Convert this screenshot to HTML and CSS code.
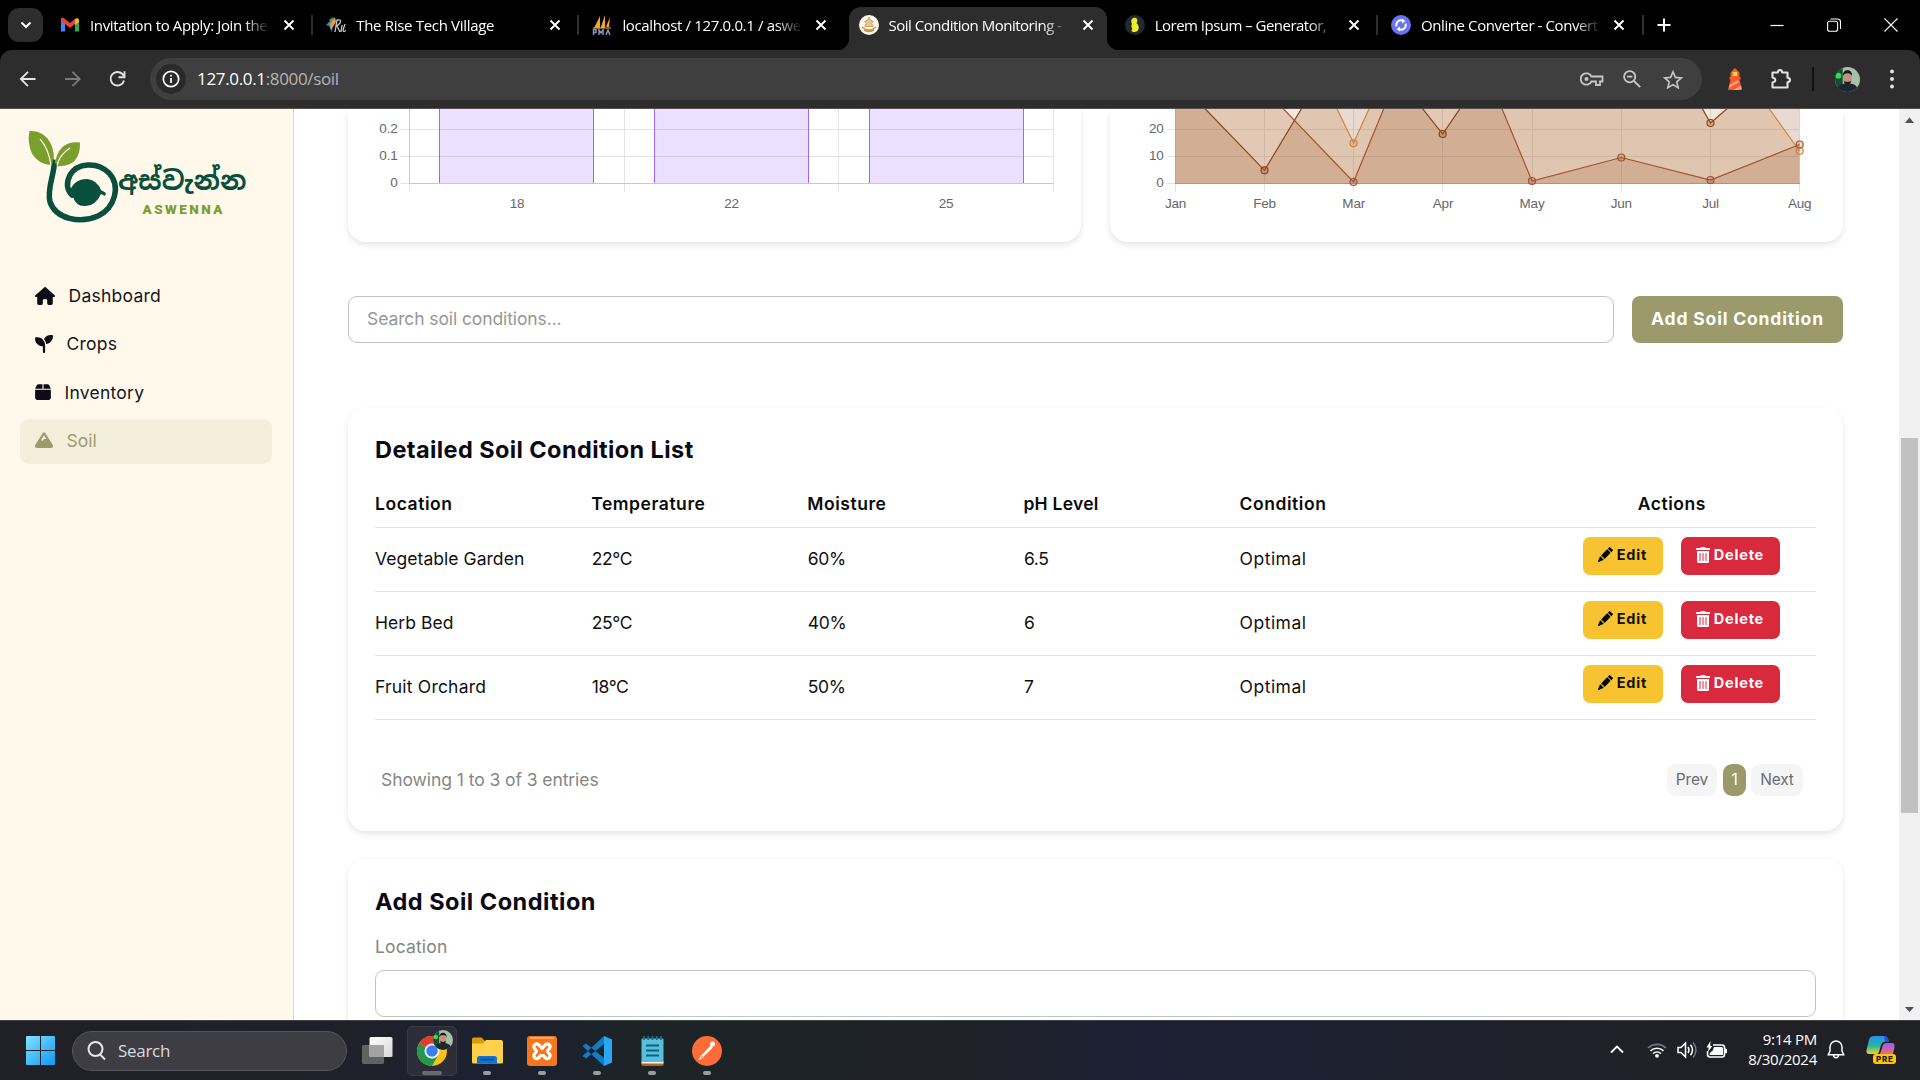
FILE: index.html
```html
<!DOCTYPE html>
<html lang="en">
<head>
<meta charset="utf-8">
<title>Soil Condition Monitoring</title>
<link rel="stylesheet" href="styles.css">
</head>
<body>
<svg class="defs" width="0" height="0">
  <symbol id="i-x" viewBox="0 0 12 12"><path d="M1.5 1.5l9 9M10.5 1.5l-9 9" stroke="#fff" stroke-width="1.9" fill="none"/></symbol>
  <symbol id="i-pencil" viewBox="0 0 16 16"><path d="M12.854.146a.5.5 0 0 0-.707 0L10.5 1.793 14.207 5.5l1.647-1.646a.5.5 0 0 0 0-.708zm.646 6.061L9.793 2.5 3.293 9H3.5a.5.5 0 0 1 .5.5v.5h.5a.5.5 0 0 1 .5.5v.5h.5a.5.5 0 0 1 .5.5v.5h.5a.5.5 0 0 1 .5.5v.207zm-7.468 7.468A.5.5 0 0 1 6 13.5V13h-.5a.5.5 0 0 1-.5-.5V12h-.5a.5.5 0 0 1-.5-.5V11h-.5a.5.5 0 0 1-.5-.5V10h-.5a.5.5 0 0 1-.175-.032l-.179.178a.5.5 0 0 0-.11.168l-2 5a.5.5 0 0 0 .65.65l5-2a.5.5 0 0 0 .168-.11z"/></symbol>
  <symbol id="i-trash" viewBox="0 0 448 512"><path d="M32 464a48 48 0 0 0 48 48h288a48 48 0 0 0 48-48V128H32zm272-256a16 16 0 0 1 32 0v224a16 16 0 0 1-32 0zm-96 0a16 16 0 0 1 32 0v224a16 16 0 0 1-32 0zm-96 0a16 16 0 0 1 32 0v224a16 16 0 0 1-32 0zM432 32H312l-9.4-18.7A24 24 0 0 0 281.1 0H166.8a23.72 23.72 0 0 0-21.4 13.3L136 32H16A16 16 0 0 0 0 48v32a16 16 0 0 0 16 16h416a16 16 0 0 0 16-16V48a16 16 0 0 0-16-16z"/></symbol>
  <symbol id="i-face" viewBox="0 0 26 26">
    <clipPath id="fc"><circle cx="13" cy="13" r="13"/></clipPath>
    <g clip-path="url(#fc)"><rect width="26" height="26" fill="#a9bfae"/><path d="M0 0h8v26H0z" fill="#1d4a35"/><circle cx="3.500" cy="9" r="3" fill="#2be04e"/><path d="M2 26c0-7 5-9 11-9s11 2 11 9z" fill="#1d2730"/><ellipse cx="13" cy="11.500" rx="4.400" ry="6" fill="#c1917a"/><path d="M8.300 9.500c-1-8 10.400-8 9.400 0-1-2-2-3-4.700-3s-3.700 1-4.700 3zM9 14c1 2 7 2 8 0 0 5-8 5-8 0z" fill="#1c1816"/></g>
  </symbol>
</svg>

<header class="tabstrip">
  <div class="tab-search"><svg width="12" height="8" viewBox="0 0 12 8"><path d="M1.500 1.500L6 6l4.500-4.500" fill="none" stroke="#fff" stroke-width="2"/></svg></div>
  <div class="tab sep">
    <svg class="fav" viewBox="0 0 20 20"><path d="M1 5v11.500h4V8z" fill="#4285f4"/><path d="M15 8v8.500h4V5z" fill="#34a853"/><path d="M1 3.500c1-1.500 2.500-1 4 .500l5 4 5-4v5l-5 4-5-4-4-3z" fill="#ea4335"/><path d="M15 4c1.500-1.500 4-1 4 1v2l-4 3z" fill="#fbbc04"/></svg>
    <span class="title t0">Invitation to Apply: Join the</span><svg class="x"><use href="#i-x"/></svg>
  </div>
  <div class="tab sep">
    <svg class="fav" viewBox="0 0 20 20"><path d="M0 10l8-8-2 15-3-6z" fill="#2f8fc4"/><path d="M4 9l5-7 1 5-5 8z" fill="#e79b3a"/><path d="M3 5l4-3-2 5z" fill="#4ca65a"/><path d="M9 17l2-12q5-1 3 3l-3 3 3 6M15 17l1-7M19 9l-2 6q1 3 3 0" fill="none" stroke="#c8c8c8" stroke-width="1.300"/></svg>
    <span class="title t1">The Rise Tech Village</span><svg class="x"><use href="#i-x"/></svg>
  </div>
  <div class="tab">
    <svg class="fav" viewBox="0 0 20 20"><path d="M2 13L8 1v12zM8.500 13L13 0v13zM14 12l4-10-1 10z" fill="#f6a32b"/><path d="M1 13h18" stroke="#f6a32b"/><path d="M1.500 20v-5.500h2.500v3h-2M7 20v-5l2 3 2-3v5M14 20l2-5 2 5" fill="none" stroke="#8b93bd" stroke-width="1.500"/></svg>
    <span class="title t2">localhost / 127.0.0.1 / aswe</span><svg class="x"><use href="#i-x"/></svg>
  </div>
  <div class="tab active">
    <svg class="fav" viewBox="0 0 20 20"><circle cx="10" cy="10" r="10" fill="#fbf8f2"/><path d="M3 12q7 6 14 0M5 15q5 3 10 0" fill="none" stroke="#c79b4a" stroke-width="1.600"/><path d="M10 2l1.300 3 3 1.500-1.500 2 1.500 3H5.700l1.500-3-1.500-2 3-1.500z" fill="#e3c691" stroke="#c79b4a" stroke-width=".8"/></svg>
    <span class="title t3">Soil Condition Monitoring -</span><svg class="x"><use href="#i-x"/></svg>
  </div>
  <div class="tab sep">
    <svg class="fav" viewBox="0 0 20 20"><circle cx="10" cy="10" r="10" fill="#1f2b2e"/><path d="M8 3q3-1 4 1 1 2-.500 4 3 3 2 6-1 3-4 3-3 0-3-2l1-1q-2-3-.500-5-2-4 1-6z" fill="#f1ee2e"/></svg>
    <span class="title t4">Lorem Ipsum – Generator,</span><svg class="x"><use href="#i-x"/></svg>
  </div>
  <div class="tab sep">
    <svg class="fav" viewBox="0 0 20 20"><circle cx="10" cy="10" r="10" fill="#6a74f0"/><path d="M5.500 11.500a4.700 4.700 0 0 1 6.500-5.700M14.500 8.500a4.700 4.700 0 0 1-6.500 5.700" fill="none" stroke="#fff" stroke-width="1.900"/><path d="M11 3.500l3.500 2.500-3.500 2.500zM9 16.500L5.500 14 9 11.500z" fill="#fff"/></svg>
    <span class="title t5">Online Converter - Convert</span><svg class="x last"><use href="#i-x"/></svg>
  </div>
  <svg class="plus" width="14" height="14" viewBox="0 0 14 14"><path d="M7 .5v13M.5 7h13" stroke="#fff" stroke-width="2"/></svg>
  <div class="winctl">
    <svg width="14" height="14" viewBox="0 0 14 14"><path d="M.5 7.500h13" stroke="#fff" stroke-width="1.200"/></svg>
    <svg width="14" height="14" viewBox="0 0 14 14" fill="none" stroke="#fff" stroke-width="1.100"><rect x=".6" y="3.200" width="10" height="10" rx="2"/><path d="M3.500 1h7a3 3 0 0 1 3 3v7"/></svg>
    <svg width="14" height="14" viewBox="0 0 14 14"><path d="M.5.5l13 13M13.500.5l-13 13" stroke="#fff" stroke-width="1.100"/></svg>
  </div>
</header>

<nav class="toolbar">
  <svg class="ic" viewBox="0 0 20 20"><path d="M17.500 10H3M10 2.800L2.800 10l7.200 7.200" fill="none" stroke="#e3e3e3" stroke-width="1.800"/></svg>
  <svg class="ic" viewBox="0 0 20 20"><path d="M2 10h14.500M9.500 2.800L16.700 10l-7.200 7.200" fill="none" stroke="#7b7b7b" stroke-width="1.800"/></svg>
  <svg class="ic" viewBox="0 0 20 20"><path d="M16 11.500A6.800 6.800 0 1 1 14.300 5l2 2" fill="none" stroke="#e3e3e3" stroke-width="1.900"/><path d="M16.500 2.200v6h-6" fill="none" stroke="#e3e3e3" stroke-width="1.900"/></svg>
  <div class="omnibox">
    <span class="info"><svg width="18" height="18" viewBox="0 0 18 18"><circle cx="9" cy="9" r="7.700" fill="none" stroke="#fff" stroke-width="1.700"/><path d="M9 8v5M9 4.800v1.700" stroke="#fff" stroke-width="1.700"/></svg></span>
    <span class="url">127.0.0.1<em>:8000/soil</em></span>
    <svg class="key" width="24" height="16" viewBox="0 0 24 16" fill="none" stroke="#c7c7c7" stroke-width="1.800"><path d="M11.500 5.500h11v5h-2.500v3.500h-4v-3.500h-4.500A5.700 5.700 0 1 1 11.500 5.500z"/><circle cx="6.500" cy="8" r="2" fill="#c7c7c7" stroke="none"/></svg>
    <svg class="mag" width="18" height="18" viewBox="0 0 18 18" fill="none" stroke="#c7c7c7" stroke-width="1.800"><circle cx="6.700" cy="6.700" r="5.600"/><path d="M11 11l6.200 6.200M4 6.700h5.400"/></svg>
    <svg class="star" width="20" height="19" viewBox="0 0 20 19"><path d="M10 1.800l2.400 5.600 6 .5-4.600 4 1.400 5.900L10 14.600l-5.200 3.200 1.400-5.900-4.600-4 6-.5z" fill="none" stroke="#c7c7c7" stroke-width="1.600"/></svg>
  </div>
  <svg class="light" width="16" height="22" viewBox="0 0 16 22"><path d="M3.500 4.500L8 0l4.500 4.500V9h1v2.500h-1L15 22H1L3.500 11.500h-1V9h1z" fill="#ff5a2b"/><path d="M5.800 4h4.400v4H5.800z" fill="#ffe23d"/><path d="M2.500 17l8.500-5 1.200 2-10.200 6zM6 22l8-4.500.7 3L12 22z" fill="#ff9f86"/></svg>
  <svg class="puz" width="22" height="22" viewBox="0 0 22 22"><path d="M2.500 4.500h5.300q.2-2.500 2.200-2.500t2.200 2.500h5.300v5.300q2.500.2 2.500 2.200t-2.500 2.200v5.300h-15v-5q2.700-.6 2.700-2.500t-2.700-2.500z" fill="none" stroke="#e3e3e3" stroke-width="2.100" stroke-linejoin="round"/></svg>
  <i class="vsep"></i>
  <svg class="face" width="25" height="25"><use href="#i-face"/></svg>
  <svg class="dots" width="6" height="20" viewBox="0 0 6 20" fill="#e3e3e3"><circle cx="3" cy="2.500" r="2"/><circle cx="3" cy="10" r="2"/><circle cx="3" cy="17.500" r="2"/></svg>
</nav>

<div class="viewport">
  <aside class="sidebar">
    <svg class="logo" width="252" height="124" viewBox="20 109 252 124">
      <path d="M29.500 131q14-1 21 12 5 10 2.500 22.500-15-1-21-12-5-11-2.500-22.500z" fill="#7a9f2c"/>
      <path d="M80 142.500q-12-1-18 5-7 7-6.500 18.500 13 1 19-5 6-7 5.500-18.500z" fill="#7a9f2c"/>
      <path d="M40 139q9 10 11 27M70 148q-11 7-13 18" fill="none" stroke="#fff8eb" stroke-width="1.200"/>
      <path d="M53 159.500l2.500 0 0 10-4 0z" fill="#08503c"/>
      <path d="M54 166C53 178 47 189 50 202c6 17 30 22 48 14 17-8 23-30 11-43-12-12-32-10-39 2-4 8-3 15 2 20" fill="none" stroke="#08503c" stroke-width="5.500" stroke-linecap="round"/>
      <path d="M70 191q4-12 17-12 10 1 14 11l5 3-1 3-4-2q-6 13-17 12-8 0-11-9z" fill="#08503c"/>
      <text x="118" y="190" class="sinhala" textLength="128.500" lengthAdjust="spacingAndGlyphs">අස්වැන්න</text>
      <text x="142.500" y="213.500" class="aswenna" textLength="80">ASWENNA</text>
    </svg>
    <a class="nav"><svg width="20" height="18" viewBox="0 0 576 512"><path d="M575.8 255.5c0 18-15 32.1-32 32.1h-32l.7 160.2c0 2.700-.2 5.400-.5 8.100V472c0 22.100-17.900 40-40 40H392c-22.100 0-40-17.900-40-40V384c0-17.700-14.300-32-32-32H256c-17.700 0-32 14.300-32 32v88c0 22.100-17.900 40-40 40H104c-22.100 0-40-17.900-40-40V287.600H32c-18 0-32-14-32-32.100c0-9 3-17 10-24L266.400 8c7-7 15-8 22-8s15 2 21 7L564.800 231.500c8 7 12 15 11 24z"/></svg><span>Dashboard</span></a>
    <a class="nav"><svg width="18" height="18" viewBox="0 0 512 512"><path d="M512 32c0 113.600-84.600 207.500-194.200 222c-7.100-53.400-30.600-101.600-65.300-139.300C290.800 46.300 364 0 448 0h32c17.700 0 32 14.300 32 32zM0 96C0 78.300 14.300 64 32 64H64c123.700 0 224 100.300 224 224v192c0 17.700-14.300 32-32 32s-32-14.300-32-32V320C100.300 320 0 219.700 0 96z"/></svg><span>Crops</span></a>
    <a class="nav"><svg width="16" height="18" viewBox="0 0 448 512"><path d="M50.700 58.500L0 160H208V32H93.700C75.500 32 58.900 42.300 50.700 58.500zM240 160H448L397.300 58.500C389.100 42.300 372.500 32 354.300 32H240V160zm208 32H0V416c0 35.300 28.700 64 64 64H384c35.300 0 64-28.700 64-64V192z"/></svg><span>Inventory</span></a>
    <a class="nav on"><svg width="18" height="18" viewBox="0 0 512 512"><path d="M256 32c12.500 0 24.100 6.400 30.700 17L503.400 394.400c5.600 8.900 8.600 19.200 8.600 29.700c0 30.900-25 55.900-55.900 55.900H55.900C25 480 0 455 0 424.100c0-10.500 3-20.800 8.600-29.700L225.200 49c6.600-10.600 18.300-17 30.800-17zm65 192L256 120.400 176.900 246.500 208 288l48-64h65z"/></svg><span>Soil</span></a>
  </aside>

  <main class="content">
    <section class="charts">
      <svg class="chart" width="733" height="133" viewBox="348 109 733 133">
        <g stroke="#e4e4e4"><path d="M401 129.500h652M401 156.500h652M401 183.500h8M409.500 184v8M624.500 109v83M838.500 109v83M1053.500 109v83"/></g>
        <g fill="#9966ff" fill-opacity=".2"><path d="M439.500 109h154v74.500h-154zM654.500 109h154v74.500h-154zM869.500 109h154v74.500h-154z"/></g>
        <path d="M439.500 109v75M593.500 109v75M654.500 109v75M808.500 109v75M869.500 109v75M1023.500 109v75" stroke="#9966ff"/>
        <path d="M409.500 109v75M409 183.500h644.500" stroke="#c9c9cd"/>
        <g text-anchor="end"><text x="397.500" y="133">0.2</text><text x="397.500" y="160">0.1</text><text x="397.500" y="187">0</text></g>
        <g text-anchor="middle"><text x="517" y="208">18</text><text x="731.500" y="208">22</text><text x="946" y="208">25</text></g>
      </svg>
      <svg class="chart" width="733" height="133" viewBox="1110 109 733 133">
        <path d="M1167 129.500h633M1167 156.500h633M1167 183.500h633M1175.500 109v83M1264.500 109v83M1353.500 109v83M1442.500 109v83M1532.500 109v83M1621.500 109v83M1710.500 109v83M1799.500 109v83" stroke="#e4e4e4" fill="none"/>
        <path d="M1175 183.500V40L1264.300-42 1353.500 143 1442.700-53 1710.500 27 1799.500 151v32.500z" fill="#cd853f" fill-opacity=".2"/>
        <path d="M1175 183.500V40L1264.300 89 1353.500 182 1442.700-34 1532 181l89.300-23.500 89.200 22.500 89-35.500v39z" fill="#a0522d" fill-opacity=".2"/>
        <path d="M1175 183.500V77.600L1264.500 170.300 1353.500 22 1442.700 134 1532 3 1621.300-33 1710.500 123 1799.500 46v137.500z" fill="#8b4513" fill-opacity=".2"/>
        <path d="M1175 183.500h625" stroke="#b4937d"/>
        <g fill="none" stroke-width="1.200">
          <path d="M1264.300-42L1353.500 143 1442.700-53 1710.500 27 1799.500 151" stroke="#cd853f"/>
          <path d="M1264.300 89L1353.500 182 1442.700-34 1532 181l89.300-23.500 89.200 22.500 89-35.500" stroke="#a0522d"/>
          <path d="M1175 77.600L1264.500 170.300 1353.500 22 1442.700 134 1532 3 1621.300-33 1710.500 123 1799.500 46" stroke="#8b4513"/>
        </g>
        <g fill="#cd853f" fill-opacity=".2" stroke="#cd853f" stroke-width="1.200"><circle cx="1353.500" cy="143.300" r="3.500"/><circle cx="1799.700" cy="151" r="3.500"/></g>
        <g fill="#a0522d" fill-opacity=".2" stroke="#a0522d" stroke-width="1.200"><circle cx="1353.500" cy="182" r="3.500"/><circle cx="1532" cy="181" r="3.500"/><circle cx="1621.300" cy="157.500" r="3.500"/><circle cx="1710.500" cy="180" r="3.500"/><circle cx="1799.700" cy="144.500" r="3.500"/></g>
        <g fill="#8b4513" fill-opacity=".2" stroke="#8b4513" stroke-width="1.200"><circle cx="1264.500" cy="170.300" r="3.500"/><circle cx="1442.700" cy="134" r="3.500"/><circle cx="1710.500" cy="123" r="3.500"/></g>
        <g text-anchor="end"><text x="1163.500" y="133">20</text><text x="1163.500" y="160">10</text><text x="1163.500" y="187">0</text></g>
        <g text-anchor="middle"><text x="1175.500" y="208">Jan</text><text x="1264.500" y="208">Feb</text><text x="1353.700" y="208">Mar</text><text x="1443" y="208">Apr</text><text x="1532" y="208">May</text><text x="1621.300" y="208">Jun</text><text x="1710.500" y="208">Jul</text><text x="1799.700" y="208">Aug</text></g>
      </svg>
    </section>

    <section class="searchrow">
      <div class="field">Search soil conditions...</div>
      <div class="addbtn">Add Soil Condition</div>
    </section>

    <section class="card list">
      <h2>Detailed Soil Condition List</h2>
      <div class="row head"><span>Location</span><span>Temperature</span><span>Moisture</span><span class="ph">pH Level</span><span>Condition</span><span class="act-h">Actions</span></div>
      <div class="row"><span>Vegetable Garden</span><span class="num">22°C</span><span class="num">60%</span><span class="num">6.5</span><span class="cond">Optimal</span><span class="act"><a class="edit"><svg width="15" height="15"><use href="#i-pencil"/></svg>Edit</a><a class="del"><svg width="14" height="16"><use href="#i-trash"/></svg>Delete</a></span></div>
      <div class="row"><span>Herb Bed</span><span class="num">25°C</span><span class="num">40%</span><span class="num">6</span><span class="cond">Optimal</span><span class="act"><a class="edit"><svg width="15" height="15"><use href="#i-pencil"/></svg>Edit</a><a class="del"><svg width="14" height="16"><use href="#i-trash"/></svg>Delete</a></span></div>
      <div class="row"><span class="fruit">Fruit Orchard</span><span class="num">18°C</span><span class="num">50%</span><span class="num">7</span><span class="cond">Optimal</span><span class="act"><a class="edit"><svg width="15" height="15"><use href="#i-pencil"/></svg>Edit</a><a class="del"><svg width="14" height="16"><use href="#i-trash"/></svg>Delete</a></span></div>
      <div class="foot"><span class="showing">Showing 1 to 3 of 3 entries</span><div class="pages"><a class="prev">Prev</a><a class="cur">1</a><a class="next">Next</a></div></div>
    </section>

    <section class="card add">
      <h2>Add Soil Condition</h2>
      <label>Location</label>
      <div class="field"></div>
    </section>
  </main>

  <div class="scroll">
    <svg width="21" height="21" viewBox="0 0 21 21"><path d="M6 14l4.500-5.500L15 14z" fill="#505050"/></svg>
    <i class="thumb"></i>
    <svg width="21" height="21" viewBox="0 0 21 21"><path d="M6 8l4.500 5L15 8z" fill="#505050"/></svg>
  </div>
</div>

<footer class="taskbar">
  <svg class="win" width="29" height="29" viewBox="0 0 29 29"><defs><linearGradient id="wg" x1="0" y1="0" x2="1" y2="1"><stop offset="0" stop-color="#7fe3ff"/><stop offset="1" stop-color="#1296f5"/></linearGradient></defs><path d="M1 0h13v14H0V1q0-1 1-1zM15 0h13q1 0 1 1v13H15zM0 15h14v14H1q-1 0-1-1zM15 15h14v13q0 1-1 1H15z" fill="url(#wg)"/></svg>
  <div class="tsearch"><svg width="20" height="20" viewBox="0 0 20 20" fill="none" stroke="#e6e6ea" stroke-width="2"><circle cx="8.500" cy="8" r="7"/><path d="M13 13.500l5 5"/></svg><span>Search</span></div>
  <svg class="tview" width="31" height="28" viewBox="0 0 31 28"><defs><linearGradient id="tg" x1="0" y1="0" x2="1" y2="1"><stop offset="0" stop-color="#fff"/><stop offset="1" stop-color="#d8d8d8"/></linearGradient></defs><rect y="8" width="22" height="19" rx="1.500" fill="#626262"/><rect x="7.500" y="0" width="23" height="20" rx="1.500" fill="url(#tg)"/><path d="M7.500 8H22v12H7.500z" fill="#a3a3a3"/></svg>
  <div class="app chrome">
    <svg width="50" height="50" viewBox="407 1025 50 50"><circle cx="432" cy="1050" r="15" fill="#fbc116"/><path d="M432 1050L419 1042.500A15 15 0 0 1 445 1042.500z" fill="#e33b2e"/><path d="M419 1042.500A15 15 0 0 0 432 1065l6.500-11.300-6.500-3.700z" fill="#229a4c"/><circle cx="432" cy="1050" r="7.500" fill="#fff"/><circle cx="432" cy="1050" r="5.800" fill="#3b7ded"/><use href="#i-face" x="433" y="1029" width="20" height="20"/></svg>
  </div>
  <div class="app"><svg width="31" height="27" viewBox="0 0 31 27"><path d="M0 2q0-1.500 1.500-1.500h8L13 4v4H0z" fill="#dc9a05"/><path d="M0 6.500h11L14 3h15q2 0 2 2v20q0 1.500-1.500 1.500h-28Q0 26.500 0 25z" fill="#ffd04a"/><path d="M5 26.500v-5q0-2.500 2.500-2.500h15q2.500 0 2.500 2.500v5z" fill="#1173cc"/><path d="M9 22.500h12" stroke="#0b4b94" stroke-width="1.500" stroke-linecap="round"/></svg></div>
  <div class="app"><svg width="30" height="30" viewBox="0 0 30 30"><rect width="30" height="30" rx="3" fill="#f6761d"/><path d="M3 1h24v2H3z" fill="#fba76a"/><path d="M8 8.500q2-1.500 4 .5l3 3.500 3-3.500q2-2 4-.5 2 2 .5 4l-2 2.500 2 3q1.500 2-.5 4-2 1.500-4-.5l-1.500-2h-3L12 21.500q-2 2-4 .5-2-2-.5-4l2-3-2-2.500q-1.500-2 .5-4z" fill="#f6761d" stroke="#fff" stroke-width="3.200" stroke-linejoin="round"/></svg></div>
  <div class="app"><svg width="30" height="30" viewBox="0 0 30 30"><path d="M22 0l8 3.500v23L22 30z" fill="#2aa7f2"/><path d="M22 0v8L4 22.500 0.500 20zM22 30v-8L4 7.500.5 10z" fill="#0f7dc8"/></svg></div>
  <div class="app"><svg width="23" height="30" viewBox="0 0 23 30"><rect x=".5" y="24" width="22" height="6" rx="1.500" fill="#b8621b"/><path d="M.5 25.500h22v2H.5z" fill="#f4f4f4"/><rect x=".5" y="2.500" width="22" height="23.500" rx="1" fill="#55bfdc"/><path d="M3 0v4M7.200 0v4M11.500 0v4M15.800 0v4M20 0v4" stroke="#1d6c8e" stroke-width="1.800"/><path d="M5 9.500h13M5 14.500h13M5 19.500h13" stroke="#135e7e" stroke-width="1.800"/></svg></div>
  <div class="app"><svg width="30" height="30" viewBox="0 0 30 30"><circle cx="15" cy="15" r="15" fill="#ff6c37"/><circle cx="20.500" cy="8" r="2.500" fill="#fff"/><path d="M18.500 10l2 1.500-8.500 8-2.500.5z" fill="#fff" stroke="#fff"/><path d="M9.500 19l-2.500 5 5-3.500" fill="none" stroke="#fff"/></svg></div>
  <div class="tray">
    <svg width="14" height="9" viewBox="0 0 14 9"><path d="M1 7.500l6-6 6 6" fill="none" stroke="#fff" stroke-width="1.900"/></svg>
    <svg class="wifi" width="20" height="16" viewBox="0 0 20 16" fill="none" stroke-width="1.600"><path d="M1 6a13 13 0 0 1 18 0" stroke="#77777f"/><path d="M3.500 8.800a9.500 9.500 0 0 1 13 0M6 11.500a6 6 0 0 1 8 0" stroke="#fff"/><circle cx="10" cy="13.800" r="1.900" fill="#fff"/></svg>
    <svg class="spk" width="20" height="18" viewBox="0 0 20 18" fill="none" stroke="#fff" stroke-width="1.500"><path d="M1 6.500h3L8.500 2v14L4 11.500H1z"/><path d="M11 6q2 3 0 6M13.500 3.800q4 5.200 0 10.400"/><path d="M16.200 1.500q5.500 7.500 0 15" stroke="#77777f"/></svg>
    <svg class="bat" width="21" height="18" viewBox="0 0 21 18"><path d="M7 4h9q2.500 0 2.500 2.500v7q0 2.500-2.500 2.500H4q-2.500 0-2.500-2.500V10" fill="none" stroke="#fff" stroke-width="1.500"/><path d="M8 6h7.500q1.500 0 1.500 1.500V14H3.500q0-3 3-4z" fill="#fff"/><path d="M19 7.500l2 .5v4l-2 .5z" fill="#fff"/><path d="M4.500 0L.5 6.500h2.200L2 11l4.300-6H4.200z" fill="#fff"/></svg>
    <div class="clock">9:14 PM<br>8/30/2024</div>
    <svg class="bell" width="18" height="19" viewBox="0 0 18 19" fill="none" stroke="#fff" stroke-width="1.500"><path d="M9 1a6 6 0 0 0-6 6v4L1.300 14.800h15.400L15 11V7a6 6 0 0 0-6-6zM6.500 15q0 2.700 2.500 2.700t2.500-2.700"/></svg>
    <svg class="cop" width="30" height="29" viewBox="0 0 30 29"><defs><linearGradient id="c1" x1="0" y1="0" x2="0" y2="1"><stop offset="0" stop-color="#2a8df0"/><stop offset=".55" stop-color="#27b7a0"/><stop offset="1" stop-color="#f2d21b"/></linearGradient><linearGradient id="c2" x1="0" y1="0" x2="0" y2="1"><stop offset="0" stop-color="#9b5cf2"/><stop offset="1" stop-color="#f06a78"/></linearGradient></defs><path d="M8 1h11q2 0 3 3l1 3h-5q-2 0-3 3l-2 7q-.5 2-2.500 2H3q-3 0-2.500-4L3 5q1-4 5-4z" fill="url(#c1)"/><path d="M18 1q3 0 4 3l1 3h-4z" fill="#2450d8"/><path d="M20 8h6q3 0 2.500 4L27 19H14l3-9q1-2 3-2z" fill="url(#c2)"/><rect x="7" y="19" width="23" height="10" rx="3" fill="#ffc40c"/><text x="10" y="27" class="pre" textLength="17">PRE</text></svg>
  </div>
</footer>
</body>
</html>
```
FILE: styles.css
```css
* { box-sizing: border-box; }
html, body { margin: 0; height: 100%; overflow: hidden; }
body { width: 1920px; height: 1080px; display: flex; flex-direction: column; background: #000; font-family: "Inter", sans-serif; }
svg { flex: none; display: block; }
.defs { position: absolute; }

/* Browser tabs */
.tabstrip { height: 50px; flex: none; display: flex; align-items: center; padding-left: 8px; background: #000; font: 15px/20px "Open Sans", sans-serif; color: #fff; }
.tab-search { width: 35px; height: 34px; border-radius: 11px; background: #2d2d2d; display: flex; align-items: center; justify-content: center; margin-right: 3px; }
.tab { position: relative; width: 266.2px; height: 50px; flex: none; display: flex; align-items: center; padding-left: 14px; }
.fav { width: 20px; height: 20px; margin-right: 10px; }
.title { width: 178px; overflow: hidden; white-space: nowrap; mask-image: linear-gradient(90deg, #000 154px, transparent 180px); }
.t0 { letter-spacing: -.36px; }
.t1 { letter-spacing: -.31px; }
.t2 { letter-spacing: -.35px; }
.t3 { letter-spacing: -.5px; }
.t4 { letter-spacing: -.52px; }
.t5 { letter-spacing: -.4px; }
.x { width: 12px; height: 12px; margin-left: 15px; }
.x.last { margin-left: 14px; }
.sep::after { content: ""; position: absolute; right: -1px; top: 15px; width: 2px; height: 20px; background: #2f2f2f; }
.active > * { position: relative; }
.active::before { content: ""; position: absolute; left: 4px; right: 4px; top: 7px; bottom: 0; background: #2d2d2d; border-radius: 12px 12px 0 0; }
.active::after { content: ""; position: absolute; left: -8px; right: -8px; bottom: 0; height: 12px; background: radial-gradient(circle at 0 0, transparent 12px, #2d2d2d 12.500px) left / 12px 12px no-repeat, radial-gradient(circle at 100% 0, transparent 12px, #2d2d2d 12.500px) right / 12px 12px no-repeat; }
.plus { margin-left: 14px; }
.winctl { margin-left: auto; display: flex; gap: 43px; padding-right: 22px; }

/* Browser toolbar */
.toolbar { height: 59px; flex: none; display: flex; align-items: center; background: #2d2d2d; border-bottom: 1px solid #55504f; border-radius: 12px 12px 0 0; padding-left: 18px; }
.ic { width: 20px; height: 20px; margin-right: 25px; }
.ic:nth-child(3) { margin-right: 22px; }
.omnibox { width: 1552px; height: 42px; flex: none; border-radius: 21px; background: #3f3f3f; display: flex; align-items: center; padding-left: 6px; }
.info { width: 30px; height: 30px; border-radius: 50%; background: #2a2a2a; display: flex; align-items: center; justify-content: center; margin-right: 11px; }
.url { font: 17px/24px "Open Sans", sans-serif; letter-spacing: -.34px; color: #fff; margin-right: auto; }
.url em { font-style: normal; color: #b5b5b5; }
.mag { margin-left: 19px; }
.star { margin: 0 19px 0 22px; }
.light { margin-left: 25px; }
.puz { margin-left: 27px; }
.vsep { width: 2px; height: 24px; background: #111; margin: 0 21px 0 20px; }
.dots { margin-left: 29px; }

/* Page */
.viewport { height: 911px; flex: none; display: flex; overflow: hidden; background: #fff; }
.sidebar { width: 294px; flex: none; border-right: 1px solid #dcdad9; background: #fff8eb; padding: 0 21px 0 20px; }
.logo { margin-bottom: 41px; }
.sinhala { font: 700 26px "Noto Sans Sinhala", "Noto Sans", sans-serif; fill: #08503c; }
.aswenna { font: 900 13.500px "Roboto", sans-serif; fill: #7a9f2c; }
.nav { display: flex; align-items: center; height: 45px; padding: 0 0 2px 15px; gap: 13.500px; margin-bottom: 3.300px; border-radius: 9px; font-size: 17.500px; letter-spacing: .25px; color: #16151d; fill: #0c0b16; }
.on { background: #f5eedd; color: #9d9b6c; fill: #9d9b6c; letter-spacing: 0; }
.content { flex: 1; padding: 0 56px 0 54px; }
.charts { display: flex; justify-content: space-between; }
.chart { border-radius: 0 0 18px 18px; background: #fff; box-shadow: 0 3px 6px rgba(0,0,0,.1); font: 13.500px "Liberation Sans", sans-serif; letter-spacing: -.2px; }
.chart text { fill: #666; }
.searchrow { display: flex; gap: 18px; margin-top: 54px; }
.field { height: 47px; border: 1px solid #c3c3c6; border-radius: 9px; padding-left: 18px; font-size: 17.500px; letter-spacing: -.1px; line-height: 44px; color: #969696; flex: 1; }
.addbtn { width: 211px; height: 47px; border-radius: 8px; background: #9c996b; color: #fff; font-weight: 700; font-size: 17.500px; letter-spacing: .83px; line-height: 46px; text-align: center; }
.card { border-radius: 18px; box-shadow: 0 3px 6px rgba(0,0,0,.1); padding: 0 27px; }
h2 { margin: 0; font: 700 23.500px/30px "Inter", sans-serif; letter-spacing: .41px; color: #0b0a14; }
.list { margin-top: 65px; height: 423px; padding-top: 27px; }
.row { display: grid; grid-template-columns: 15% 15% 15% 15% 20% 20%; height: 64px; border-bottom: 1px solid #dfe1e3; line-height: 62px; font-size: 17.500px; color: #101010; }
.row > span { white-space: nowrap; letter-spacing: .05px; }
.row .num { letter-spacing: -.35px; padding-left: .5px; }
.row .cond { letter-spacing: .5px; }
.row .fruit { letter-spacing: .2px; }
.head { height: 63px; padding-top: 14px; line-height: 50px; color: #0b0b0b; font-weight: 600; }
.row.head > span { letter-spacing: .55px; }
.row.head .ph { letter-spacing: .25px; }
.act-h { text-align: center; }
.row .act { display: flex; gap: 18px; padding: 9px 0 0 55px; font-size: 14.500px; font-weight: 700; line-height: 36px; letter-spacing: .8px; }
.act a { height: 38px; border-radius: 7px; display: flex; }
.act svg { margin: 10px 4px 0 15px; }
.edit { width: 80px; background: #f7c330; }
.del { width: 99px; background: #d8293d; color: #fff; fill: #fff; }
.foot { display: flex; justify-content: space-between; padding: 44px 13px 0 6px; }
.showing { font-size: 17.500px; line-height: 32px; letter-spacing: -.07px; color: #868686; }
.pages { display: flex; }
.pages a { height: 32px; border-radius: 9px; background: #f5f5f5; text-align: center; font-size: 15.500px; line-height: 31px; letter-spacing: -.15px; color: #666c75; }
.pages .prev { width: 50px; }
.pages .cur { width: 23px; margin: 0 5px 0 6px; background: #9c996b; color: #fff; }
.pages .next { width: 52px; }
.add { margin-top: 28px; height: 300px; padding-top: 28px; }
.add h2 { letter-spacing: .5px; }
.add label { display: block; font-size: 17.500px; line-height: 24px; letter-spacing: .15px; color: #858585; margin: 18px 0 11px; }
.scroll { width: 21px; flex: none; background: #f1f1f1; display: flex; flex-direction: column; }
.thumb { width: 17px; height: 375px; margin: 308px 0 auto 2px; background: #c1c1c1; }

/* Windows taskbar */
.taskbar { height: 60px; flex: none; display: flex; align-items: center; border-top: 1px solid #3f4347; background: linear-gradient(90deg, #202126 0, #20202b 20%, #1b2030 25%, #1c2426 35%, #1f2128 50%, #1b2034 60%, #1f202b 78%, #202124 100%); padding-left: 26px; font: 15px/20px "Open Sans", sans-serif; color: #fff; }
.tsearch { width: 275px; height: 40px; margin: 0 15px 0 17px; flex: none; border-radius: 20px; border: 1px solid #55555c; background: #3e3d44; display: flex; align-items: center; gap: 11px; padding-left: 14px; font-size: 17px; letter-spacing: -.3px; color: #dadadf; }
.tview { margin-right: 14px; }
.app { position: relative; width: 50px; height: 50px; margin-right: 5px; flex: none; display: flex; align-items: center; justify-content: center; }
.app::after { content: ""; position: absolute; left: 21px; bottom: 1px; width: 8px; height: 4px; border-radius: 2px; background: #9b9ca0; }
.chrome { background: #2d2d39; border: 1px solid #3a3a45; border-radius: 5px; }
.chrome::after { left: 14px; width: 20px; background: #6a6a6e; bottom: 0; }
.tray { margin-left: auto; display: flex; align-items: center; padding: 0 24px 2px 0; }
.wifi { margin-left: 23px; }
.spk { margin-left: 10px; }
.bat { margin-left: 9px; }
.clock { width: 80px; margin: 0 0 2px 10px; text-align: right; letter-spacing: -.25px; }
.bell { margin-left: 10px; }
.cop { margin-left: 21px; }
.pre { font: 800 8px "Inter", sans-serif; fill: #1b1b1b; }
```
